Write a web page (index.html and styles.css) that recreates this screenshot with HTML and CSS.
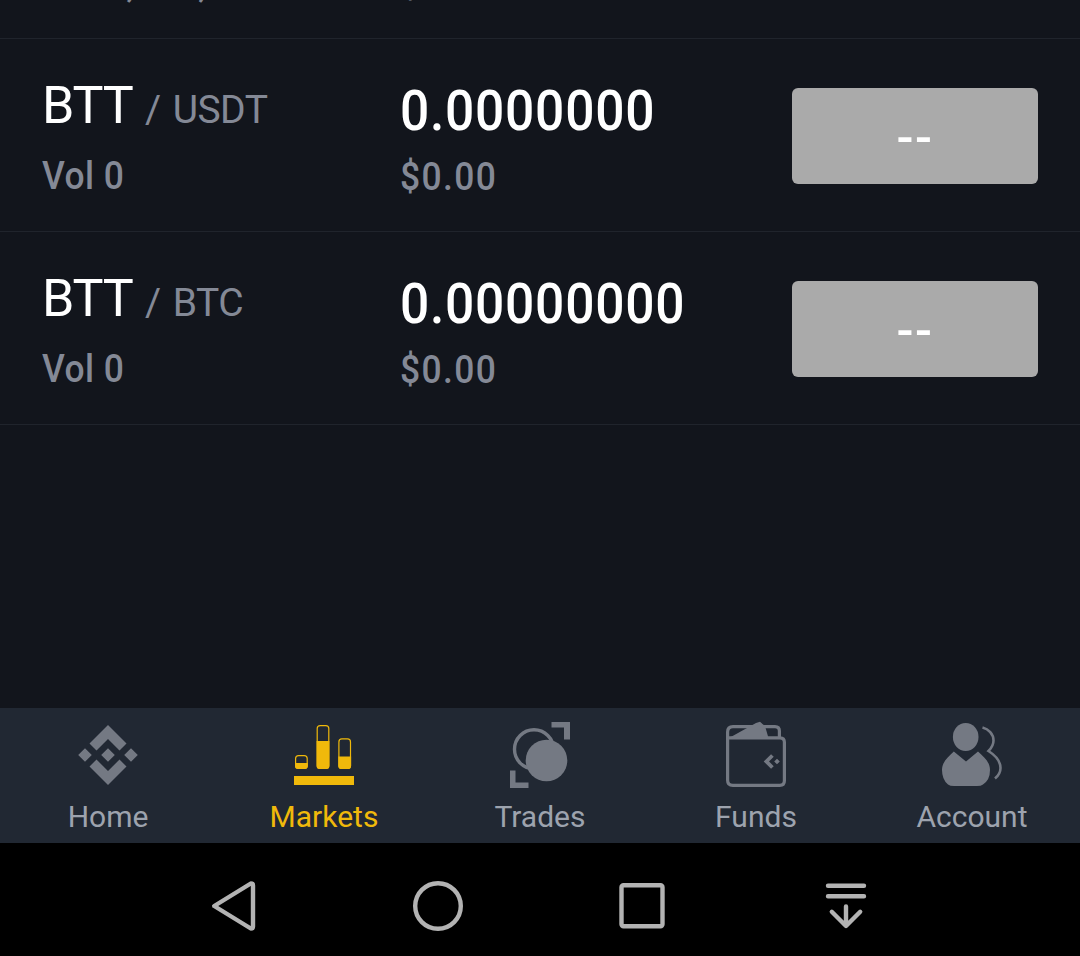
FILE: index.html
```html
<!DOCTYPE html>
<html lang="en">
<head>
<meta charset="utf-8">
<title>Markets</title>
<link rel="stylesheet" href="styles.css">
</head>
<body>
<div class="app">
  <main class="list">
    <div class="scrolled">
      <div class="row">
        <div class="pair"><div class="name"><span class="base">BTT</span><span class="slash">/</span><span class="quote">BNB</span></div><div class="sub vol">Vol 0,000,000</div></div>
        <div class="value"><div class="price">0.0000000</div><div class="sub usd">$0.00</div></div>
        <div class="change"><span class="dashes">--</span></div>
      </div>
    </div>
    <div class="row">
      <div class="pair"><div class="name"><span class="base">BTT</span><span class="slash">/</span><span class="quote">USDT</span></div><div class="sub">Vol 0</div></div>
      <div class="value"><div class="price">0.0000000</div><div class="sub usd">$0.00</div></div>
      <div class="change"><span class="dashes">--</span></div>
    </div>
    <div class="row">
      <div class="pair"><div class="name"><span class="base">BTT</span><span class="slash">/</span><span class="quote">BTC</span></div><div class="sub">Vol 0</div></div>
      <div class="value"><div class="price">0.00000000</div><div class="sub usd">$0.00</div></div>
      <div class="change"><span class="dashes">--</span></div>
    </div>
  </main>
  <nav class="tabs">
    <a class="tab">
      <svg class="icon" viewBox="72 719 72 72"><path fill="currentColor" d="M108 725l18.500 18.500-7 7L108 739 96.500 750.500l-7-7zM108 785l18.500-18.500-7-7L108 771 96.500 759.500l-7 7zM108 748.200l6.800 6.800-6.800 6.800-6.800-6.800zM85 748.200l6.800 6.800-6.800 6.800-6.800-6.800zM131 748.200l6.800 6.800-6.800 6.800-6.800-6.800z"/></svg>
      <span class="label">Home</span>
    </a>
    <a class="tab active">
      <svg class="icon" viewBox="288 719 72 72"><g fill="none" stroke="currentColor" stroke-width="1.200"><rect x="295.600" y="755.600" width="11.600" height="12.800" rx="3"/><rect x="317.200" y="725.600" width="11.600" height="42.800" rx="3"/><rect x="338.900" y="738.900" width="11.600" height="29.500" rx="3"/></g><path fill="currentColor" d="M295 763h12.800v3q0 3-3 3H298q-3 0-3-3zM316.600 741h12.800v25q0 3-3 3h-6.800q-3 0-3-3zM338.300 756.500h12.800v9.500q0 3-3 3h-6.800q-3 0-3-3zM294 776h60v9h-60z"/></svg>
      <span class="label">Markets</span>
    </a>
    <a class="tab">
      <svg class="icon" viewBox="504 719 72 72"><circle cx="534" cy="749.300" r="19.500" fill="none" stroke="currentColor" stroke-width="3.400"/><circle cx="546.500" cy="760.500" r="20.800" fill="currentColor"/><path fill="currentColor" d="M551.500 722H570v17.500h-6V727.500h-12.500zM510 770.500h5.500V782.500h13V788H510z"/></svg>
      <span class="label">Trades</span>
    </a>
    <a class="tab">
      <svg class="icon" viewBox="720 719 72 72"><g fill="none" stroke="currentColor" stroke-width="3.200"><path d="M727.600 738v-6q0-5.400 5.400-5.400h42q4.400 0 4.400 4.400v6M727.600 737.800H780q4.400 0 4.400 4.400v38.600q0 4.600-4.600 4.600h-47q-5.200 0-5.200-5.200z"/><path stroke-width="3.800" d="M772.400 755.500l-6 6 6 6"/></g><path fill="currentColor" d="M729 738l27-15 4-1.200 2.500 2.200L765 726l3.500 12zM777 758.700l2.800 2.800-2.800 2.800-2.800-2.800z"/></svg>
      <span class="label">Funds</span>
    </a>
    <a class="tab">
      <svg class="icon" viewBox="936 719 72 72"><ellipse cx="965.700" cy="737" rx="12.800" ry="14" fill="currentColor"/><path fill="currentColor" d="M953.800 751.500L966 761.500l12-10C984 757 990 762 990 770q0 10-7 14.500-2 1.500-6 1.500h-23q-4 0-6-1.500-6-5-6-14.500c0-8 6-13 11.800-18.500z"/><path fill="none" stroke="currentColor" stroke-width="2.600" d="M982.500 727.500c6 1.500 11 6.500 11 13q0 5.500-5 10.500c7 4.500 12 9.500 12 17q0 6-5.500 10.500"/></svg>
      <span class="label">Account</span>
    </a>
  </nav>
  <footer class="system">
    <svg class="key" viewBox="202 874 64 64"><path d="M250.800 883.500L214.200 906l36.600 22.500q2.200 0 2.200-2v-41q0-2-2.200-2z"/></svg>
    <svg class="key" viewBox="406 874 64 64"><circle cx="438" cy="906" r="22.800"/></svg>
    <svg class="key" viewBox="610 874 64 64"><rect x="621.500" y="885.300" width="41" height="41" rx="2"/></svg>
    <svg class="key" viewBox="814 874 64 64"><path d="M828 885.700h36M828 896.300h36M846 906.500V925M831.800 911.800L846 926l14.200-14.200"/></svg>
  </footer>
</div>
</body>
</html>
```
FILE: styles.css
```css
* { box-sizing: border-box; }
body { margin: 0; background: #000; font-family: Roboto, "Liberation Sans", sans-serif; }
.app { width: 1080px; height: 956px; display: flex; flex-direction: column; overflow: hidden; background: #12151c; }
.list { flex: 1; }
.scrolled { height: 39px; display: flex; flex-direction: column; justify-content: flex-end; overflow: hidden; }
.row { height: 193px; flex: none; display: grid; grid-template-columns: 358px 392px 246px; padding: 49px 42px 0; border-bottom: 1px solid #20242c; }
.name { height: 68px; line-height: 36px; display: flex; align-items: baseline; white-space: pre; }
.base { font-size: 52px; letter-spacing: -1.2px; color: #fff; }
.slash, .quote { font-size: 39px; color: #848996; }
.slash { margin-left: 12.500px; }
.quote { margin-left: 11.500px; letter-spacing: -0.5px; }
.sub { font-size: 38.500px; line-height: 40px; font-weight: 500; color: #848996; white-space: nowrap; transform: scaleX(.92); transform-origin: left; letter-spacing: .5px; }
.vol { letter-spacing: .95px; }
.usd { letter-spacing: 1.5px; }
.price { height: 69px; padding-top: 1px; line-height: 44px; font-size: 56px; font-weight: 500; color: #fff; white-space: nowrap; transform: scaleX(.92); transform-origin: left; letter-spacing: .8px; }
.change { height: 96px; border-radius: 6px; background: #aaa; display: flex; align-items: center; justify-content: center; }
.dashes { padding-top: 3px; color: #fff; font-size: 50px; font-weight: 500; line-height: 50px; letter-spacing: 1.5px; }
.tabs { height: 135px; flex: none; display: grid; grid-template-columns: repeat(5, 1fr); background: #212833; }
.tab { display: flex; flex-direction: column; align-items: center; padding-top: 11px; color: #747983; }
.icon { width: 72px; height: 72px; display: block; }
.label { margin-top: 8px; font-size: 30px; line-height: 36px; letter-spacing: 0; color: #9da3ae; }
.active, .active .label { color: #f0b90b; }
.system { height: 113px; flex: none; display: flex; gap: 140px; padding: 31px 0 0 202px; background: #000; }
.key { width: 64px; height: 64px; display: block; fill: none; stroke: #b3b3b3; stroke-width: 4.400; stroke-linecap: round; stroke-linejoin: round; }
```
